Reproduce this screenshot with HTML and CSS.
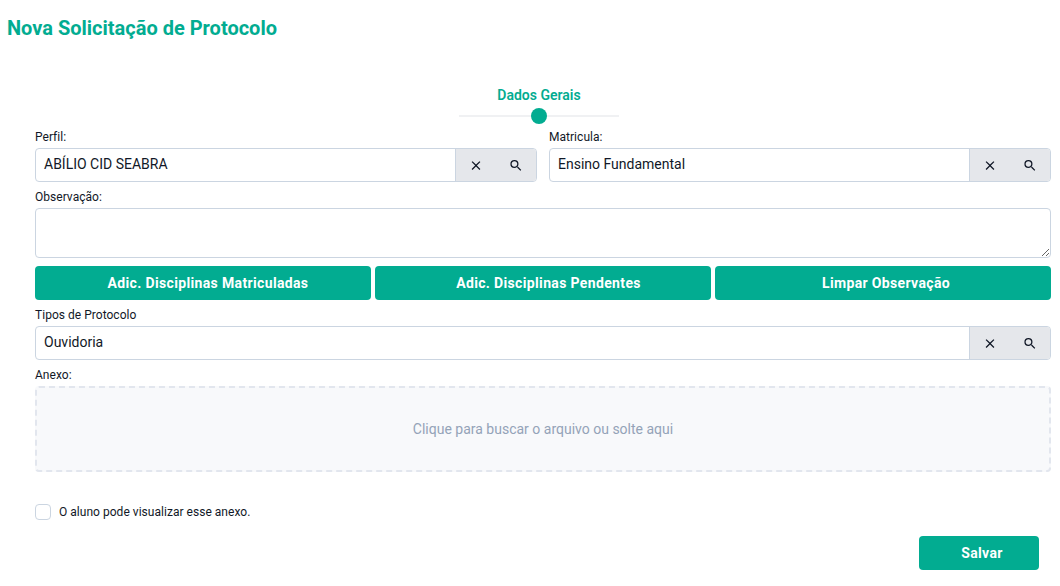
FILE: index.html
```html
<!DOCTYPE html>
<html lang="pt-BR">
<head>
<meta charset="utf-8">
<title>Nova Solicitação de Protocolo</title>
<link rel="stylesheet" href="styles.css">
</head>
<body>
<h1 class="title">Nova Solicitação de Protocolo</h1>
<div class="stepper">
  <div class="step-label">Dados Gerais</div>
  <div class="step-track"><span class="step-dot"></span></div>
</div>
<form class="form">
  <div class="two-cols">
    <div class="field">
      <label class="label">Perfil:</label>
      <div class="lookup">
        <div class="lookup-value">ABÍLIO CID SEABRA</div>
        <div class="lookup-actions">
          <button type="button" class="icon-btn"><svg viewBox="0 0 24 24" class="icon"><path d="M19 6.41 17.59 5 12 10.59 6.41 5 5 6.41 10.59 12 5 17.59 6.41 19 12 13.41 17.59 19 19 17.59 13.41 12z"/></svg></button>
          <button type="button" class="icon-btn"><svg viewBox="0 0 24 24" class="icon"><path d="M15.5 14h-.79l-.28-.27A6.47 6.47 0 0 0 16 9.5 6.5 6.5 0 1 0 9.5 16c1.61 0 3.09-.59 4.23-1.57l.27.28v.79l5 4.99L20.49 19l-4.99-5zm-6 0C7.01 14 5 11.99 5 9.5S7.01 5 9.5 5 14 7.01 14 9.5 11.99 14 9.5 14z"/></svg></button>
        </div>
      </div>
    </div>
    <div class="field">
      <label class="label">Matricula:</label>
      <div class="lookup">
        <div class="lookup-value">Ensino Fundamental</div>
        <div class="lookup-actions">
          <button type="button" class="icon-btn"><svg viewBox="0 0 24 24" class="icon"><path d="M19 6.41 17.59 5 12 10.59 6.41 5 5 6.41 10.59 12 5 17.59 6.41 19 12 13.41 17.59 19 19 17.59 13.41 12z"/></svg></button>
          <button type="button" class="icon-btn"><svg viewBox="0 0 24 24" class="icon"><path d="M15.5 14h-.79l-.28-.27A6.47 6.47 0 0 0 16 9.5 6.5 6.5 0 1 0 9.5 16c1.61 0 3.09-.59 4.23-1.57l.27.28v.79l5 4.99L20.49 19l-4.99-5zm-6 0C7.01 14 5 11.99 5 9.5S7.01 5 9.5 5 14 7.01 14 9.5 11.99 14 9.5 14z"/></svg></button>
        </div>
      </div>
    </div>
  </div>
  <div class="field obs">
    <label class="label">Observação:</label>
    <textarea class="textarea"></textarea>
  </div>
  <div class="three-btns">
    <button type="button" class="btn btn-matriculadas">Adic. Disciplinas Matriculadas</button>
    <button type="button" class="btn btn-pendentes">Adic. Disciplinas Pendentes</button>
    <button type="button" class="btn btn-limpar">Limpar Observação</button>
  </div>
  <div class="field tipos">
    <label class="label">Tipos de Protocolo</label>
    <div class="lookup">
      <div class="lookup-value">Ouvidoria</div>
      <div class="lookup-actions">
        <button type="button" class="icon-btn"><svg viewBox="0 0 24 24" class="icon"><path d="M19 6.41 17.59 5 12 10.59 6.41 5 5 6.41 10.59 12 5 17.59 6.41 19 12 13.41 17.59 19 19 17.59 13.41 12z"/></svg></button>
        <button type="button" class="icon-btn"><svg viewBox="0 0 24 24" class="icon"><path d="M15.5 14h-.79l-.28-.27A6.47 6.47 0 0 0 16 9.5 6.5 6.5 0 1 0 9.5 16c1.61 0 3.09-.59 4.23-1.57l.27.28v.79l5 4.99L20.49 19l-4.99-5zm-6 0C7.01 14 5 11.99 5 9.5S7.01 5 9.5 5 14 7.01 14 9.5 11.99 14 9.5 14z"/></svg></button>
      </div>
    </div>
  </div>
  <div class="field anexo">
    <label class="label">Anexo:</label>
    <div class="dropzone">Clique para buscar o arquivo ou solte aqui</div>
  </div>
  <div class="check-row">
    <span class="checkbox"></span>
    <span class="check-text">O aluno pode visualizar esse anexo.</span>
  </div>
  <div class="save-row">
    <button type="button" class="btn save">Salvar</button>
  </div>
</form>
</body>
</html>
```
FILE: styles.css
```css
* { box-sizing: border-box; }
html, body { margin: 0; padding: 0; background: #fff; }
body { font-family: Roboto, "Liberation Sans", sans-serif; color: #111827; width: 1060px; height: 586px; overflow: hidden; }
.title { margin: 0; padding: 16px 0 0 7px; font-size: 20px; line-height: 24px; font-weight: 700; color: #02ac91; }
.stepper { display: flex; flex-direction: column; align-items: center; margin-top: 45px; margin-left: 18px; width: 1042px; }
.step-label { font-size: 14px; line-height: 20px; font-weight: 600; color: #02ac91; }
.step-track { position: relative; width: 160px; height: 2px; margin-top: 10px; background: #f0f1f3; }
.step-dot { position: absolute; left: 72px; top: -7px; width: 16px; height: 16px; border-radius: 50%; background: #02ac91; }
.form { padding: 0 9px 0 35px; margin-top: 11px; }
.two-cols { display: grid; grid-template-columns: 1fr 1fr; column-gap: 12px; }
.label { display: block; height: 20px; font-size: 12px; line-height: 18px; letter-spacing: 0.03px; color: #111827; }
.lookup { display: flex; height: 34px; border: 1px solid #cbd5e1; border-radius: 4px; overflow: hidden; }
.lookup-value { flex: 1; padding-left: 8px; font-size: 14px; line-height: 30px; color: #111827; }
.lookup-actions { display: flex; width: 81px; flex: none; background: #e5e7eb; border-left: 1px solid #cbd5e1; }
.icon-btn { width: 40px; padding: 0; border: 0; background: transparent; display: flex; align-items: center; justify-content: center; }
.icon { width: 15px; height: 15px; fill: #111827; transform: translateX(-0.5px); }
.obs { margin-top: 6px; }
.textarea { display: block; width: 100%; height: 50px; border: 1px solid #cbd5e1; border-radius: 4px; background: #fff; resize: vertical; outline: 0; }
.three-btns { display: grid; grid-template-columns: repeat(3, 1fr); column-gap: 4px; margin-top: 8px; }
.btn { height: 34px; border: 0; border-radius: 4px; background: #02ac91; color: #fff; font-family: Roboto, "Liberation Sans", sans-serif; font-size: 14px; font-weight: 700; letter-spacing: 0.35px; padding: 0; }
.btn-matriculadas { padding-left: 10px; }
.btn-pendentes { padding-left: 11px; }
.btn-limpar { padding-left: 6px; }
.tipos { margin-top: 6px; }
.anexo { margin-top: 6px; }
.dropzone { height: 86px; display: flex; align-items: center; justify-content: center; background: #f8f9fb; border: 2px dashed #e2e6ee; border-radius: 4px; font-size: 14px; color: #94a3b8; }
.check-row { display: flex; align-items: center; gap: 8px; margin-top: 32px; height: 16px; }
.checkbox { width: 16px; height: 16px; border: 1px solid #cbd5e1; border-radius: 4px; background: #fff; }
.check-text { font-size: 12px; line-height: 16px; letter-spacing: 0.03px; color: #111827; }
.save-row { display: flex; justify-content: flex-end; padding-right: 12px; margin-top: 16px; }
.save { width: 120px; padding-left: 6px; }
```
